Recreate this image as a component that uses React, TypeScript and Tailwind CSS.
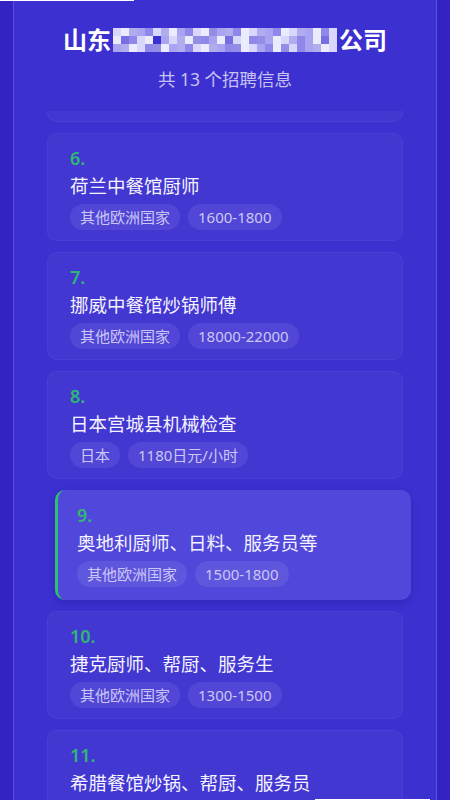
import React from "react";

const jobs = [
  { no: 6, title: "荷兰中餐馆厨师", tags: ["其他欧洲国家", "1600-1800"] },
  { no: 7, title: "挪威中餐馆炒锅师傅", tags: ["其他欧洲国家", "18000-22000"] },
  { no: 8, title: "日本宫城县机械检查", tags: ["日本", "1180日元/小时"] },
  { no: 9, title: "奥地利厨师、日料、服务员等", tags: ["其他欧洲国家", "1500-1800"], active: true },
  { no: 10, title: "捷克厨师、帮厨、服务生", tags: ["其他欧洲国家", "1300-1500"] },
  { no: 11, title: "希腊餐馆炒锅、帮厨、服务员", tags: ["其他欧洲国家", "1300-1500"] },
];

// pixelated company name (blurred in the source)
const mosaic = [
  "bd9acb9dacbd8a9cdb9acdb9adcb",
  "d7cbd6ab9d8cad7bdc8adb9cad7b",
  "a9dbc8da9cbd9ac8dbacd8bca9db",
];
const shade: Record<string, string> = {
  "7": "bg-white/30",
  "8": "bg-white/45",
  "9": "bg-white/60",
  a: "bg-[#aaa3f1]",
  b: "bg-[#d9d6fb]",
  c: "bg-[#8f87ea]",
  d: "bg-[#ecebfd]",
};

const Blur = () => (
  <span className="mx-[2px] inline-flex flex-col align-middle">
    {mosaic.map((row, r) => (
      <span key={r} className="flex">
        {row.split("").map((c, i) => (
          <span key={i} className={`h-[8px] w-[8px] ${shade[c]}`} />
        ))}
      </span>
    ))}
  </span>
);

const Card = ({ job }: { job: (typeof jobs)[number] }) => (
  <div
    className={
      job.active
        ? "h-[110px] shrink-0 translate-x-[8px] rounded-[10px] border-l-[3px] border-[#2fbf6e] bg-[#5148db] pl-[19px] pt-[14px] shadow-[0_3px_8px_rgba(20,10,120,0.25)]"
        : "h-[108px] shrink-0 rounded-[10px] border border-white/[0.04] bg-white/[0.035] pl-[22px] pt-[13px]"
    }
  >
    <div className="text-[18px] font-semibold leading-[22px] text-[#2eb872]">{job.no}.</div>
    <div className="mt-[4px] text-[18.5px] leading-[26px] text-[#f4f3ff]">{job.title}</div>
    <div className="mt-[5px] flex gap-[8px]">
      {job.tags.map((t) => (
        <span
          key={t}
          className="rounded-full bg-white/[0.08] px-[10px] text-[15px] leading-[26px] text-[#cbc7f5]"
        >
          {t}
        </span>
      ))}
    </div>
  </div>
);

export default function App() {
  return (
    <div
      className="relative h-[800px] w-[450px] overflow-hidden bg-[#3323c4]"
      style={{ fontFamily: '"Noto Sans", "Noto Sans CJK SC", sans-serif' }}
    >
      <div className="mx-[13px] h-full border-x border-[#5a4fe2] bg-[#3d30d1]">
        <div className="h-[111px] pt-[24px] text-center">
          <h1 className="flex items-center justify-center text-[24px] font-bold leading-[32px] text-white">
            山东
            <Blur />
            公司
          </h1>
          <p className="mt-[10px] text-[17.5px] leading-[26px] text-[#c6c2f1]">共 13 个招聘信息</p>
        </div>

        <div className="flex flex-col gap-[11px] px-[33px]">
          <div className="h-[11px] shrink-0 rounded-b-[10px] border-x border-b border-white/[0.04] bg-white/[0.035]" />
          {jobs.map((j) => (
            <Card key={j.no} job={j} />
          ))}
        </div>
      </div>
      <div className="absolute left-0 top-0 h-[1px] w-[134px] bg-white" />
      <div className="absolute bottom-0 right-[20px] h-[1px] w-[115px] bg-white" />
    </div>
  );
}
